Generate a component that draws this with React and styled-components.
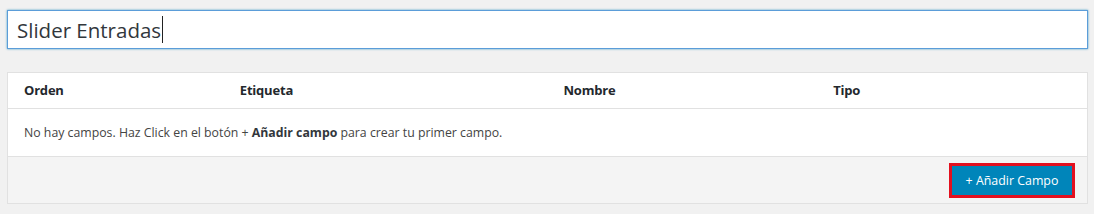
import React from "react";
import styled, { createGlobalStyle } from "styled-components";

const GlobalStyle = createGlobalStyle`
    html, body {
        margin:0;
        padding:0;
        background:#f1f1f1;
    }
    body {
        font-family:"Open Sans", "Noto Sans", sans-serif;
        color:#32373c;
    }
`;

const Page = styled.div`
    padding:10px 6px 10px 7px;
    width:1081px;
`;

const TitleInput = styled.div`
    height:39px;
    box-sizing:border-box;
    border:1px solid #5b9dd9;
    box-shadow:0 0 2px rgba(30,140,190,0.8);
    background:#fff;
    display:flex;
    align-items:center;
    padding:0 9px;
    font-size:20.5px;
    color:#32373c;
`;

const Caret = styled.span`
    display:inline-block;
    width:1px;
    height:27px;
    background:#222;
    margin-left:1px;
`;

const Box = styled.div`
    margin-top:23px;
    border:1px solid #e1e1e1;
    background:#fff;
`;

const Row = styled.div`
    display:grid;
    grid-template-columns:20% 30% 25% 25%;
    height:${props => props.h}px;
    align-items:center;
    border-bottom:1px solid #e1e1e1;
`;

const HeadCell = styled.div`
    padding-left:16px;
    font-weight:700;
    font-size:13px;
    color:#23282d;
    letter-spacing:-0.2px;
    margin-top:-1px;
`;

const Empty = styled.div`
    height:47px;
    display:flex;
    align-items:center;
    padding-left:16px;
    font-size:12.3px;
    color:#444;
    border-bottom:1px solid #e1e1e1;
    b { font-weight:700; color:#32373c; }
`;

const Footer = styled.div`
    height:46px;
    background:#f4f4f4;
    display:flex;
    justify-content:flex-end;
    align-items:center;
    padding-right:12px;
`;

const AddButton = styled.button`
    width:126px;
    height:35px;
    box-sizing:border-box;
    border:3px solid #e3101f;
    background:#0085ba;
    color:#fff;
    font-family:"Open Sans", "Noto Sans", sans-serif;
    font-size:12.4px;
    padding:0;
    margin-top:1px;
    cursor:pointer;
`;

const App = () => (
    <>
        <GlobalStyle />
        <Page>
            <TitleInput>
                Slider Entradas<Caret />
            </TitleInput>
            <Box>
                <Row h={35}>
                    <HeadCell>Orden</HeadCell>
                    <HeadCell>Etiqueta</HeadCell>
                    <HeadCell>Nombre</HeadCell>
                    <HeadCell>Tipo</HeadCell>
                </Row>
                <Empty>
                    <span>No hay campos. Haz Click en el botón + <b>Añadir campo</b> para crear tu primer campo.</span>
                </Empty>
                <Footer>
                    <AddButton>+ Añadir Campo</AddButton>
                </Footer>
            </Box>
        </Page>
    </>
);

export default App;
